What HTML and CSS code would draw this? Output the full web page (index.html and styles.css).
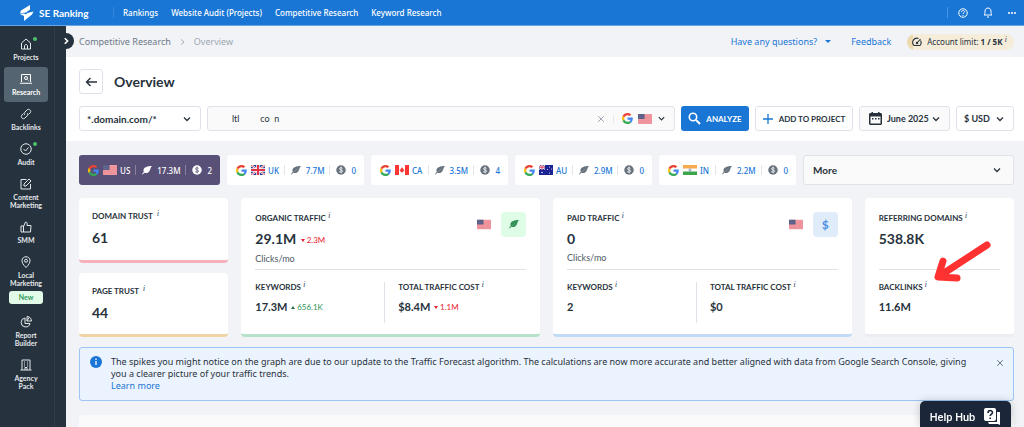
FILE: index.html
```html
<!DOCTYPE html>
<html lang="en">
<head>
    <meta charset="UTF-8">
    <meta name="viewport" content="width=device-width, initial-scale=1.0">
    <title>SE Ranking - Overview</title>
    <link rel="stylesheet" href="styles.css">
</head>
<body>
    <!-- shared icons -->
    <svg class="sprite" aria-hidden="true">
        <symbol id="google" viewBox="0 0 48 48">
            <path fill="#EA4335" d="M24 9.5c3.5 0 6.700 1.200 9.200 3.600l6.900-6.900C35.900 2.400 30.500 0 24 0 14.600 0 6.500 5.400 2.600 13.200l8 6.200C12.400 13.700 17.700 9.500 24 9.500z"/>
            <path fill="#4285F4" d="M47 24.500c0-1.600-.2-3.100-.4-4.500H24v9h12.900c-.6 3-2.200 5.500-4.800 7.200l7.700 6C44.400 38 47 31.800 47 24.500z"/>
            <path fill="#FBBC05" d="M10.500 28.600c-.5-1.500-.8-3-.8-4.600s.3-3.100.8-4.600l-8-6.200C.9 16.500 0 20.100 0 24s.9 7.500 2.600 10.800z"/>
            <path fill="#34A853" d="M24 48c6.500 0 11.900-2.100 15.900-5.800l-7.700-6c-2.200 1.500-4.900 2.300-8.200 2.300-6.300 0-11.600-4.200-13.500-9.900l-8 6.200C6.500 42.600 14.600 48 24 48z"/>
        </symbol>
        <symbol id="flag-us" viewBox="0 0 28 20">
            <rect width="28" height="20" rx="1" fill="#ef9aa2"/>
            <path d="M0 4.500h28M0 8.500h28M0 12.500h28M0 16.500h28" stroke="#e8808c"/>
            <rect width="13" height="10" fill="#5b5f88"/>
            <path d="M2 3h9M2 7h9" stroke="#8b8fae" stroke-dasharray="1 2"/>
        </symbol>
        <symbol id="flag-uk" viewBox="0 0 28 20">
            <rect width="28" height="20" fill="#22408f"/>
            <path d="M0 0l28 20M28 0L0 20" stroke="#fff" stroke-width="4"/>
            <path d="M0 0l28 20M28 0L0 20" stroke="#e2334b" stroke-width="1.500"/>
            <path d="M14 0v20M0 10h28" stroke="#fff" stroke-width="7"/>
            <path d="M14 0v20M0 10h28" stroke="#e2334b" stroke-width="4"/>
        </symbol>
        <symbol id="flag-ca" viewBox="0 0 28 20">
            <rect width="28" height="20" fill="#fff"/>
            <path fill="#fb3434" d="M0 0h8v20H0zM20 0h8v20h-8zM14 4l1.500 3 1-.5v3l2-1-.5 2 1 .5-3.500 3h-3l-3.500-3 1-.5-.5-2 2 1v-3l1 .5zM13.500 13h1v3h-1z"/>
        </symbol>
        <symbol id="flag-au" viewBox="0 0 28 20">
            <rect width="28" height="20" fill="#1c2394"/>
            <path d="M0 0l12 9M12 0L0 9" stroke="#fff" stroke-width="2"/>
            <path d="M6 0v9M0 4.500h12" stroke="#fff" stroke-width="3.500"/>
            <path d="M6 0v9M0 4.500h12" stroke="#e2334b" stroke-width="1.800"/>
            <g fill="#fff"><circle cx="6" cy="15" r="1.500"/><circle cx="21" cy="4" r="1"/><circle cx="21" cy="16" r="1"/><circle cx="17" cy="9" r="1"/><circle cx="25" cy="8" r="1"/></g>
        </symbol>
        <symbol id="flag-in" viewBox="0 0 28 20">
            <rect width="28" height="20" fill="#fff"/>
            <rect width="28" height="7" fill="#f6ab4e"/>
            <rect y="13" width="28" height="7" fill="#3da64c"/>
            <circle cx="14" cy="10" r="2.200" fill="none" stroke="#3b4a9b"/>
        </symbol>
        <symbol id="leaf" viewBox="0 0 20 20">
            <path fill="currentColor" d="M20 2C11 2 4 4 3 10c-.3 1.500 0 2.700.6 3.700L0 18l1.500 1 2.800-3.500c5 2 10-.5 11.700-5.500C17 7 17 5 20 2z"/>
            <path d="M5 14.500l8-7" stroke="#fff" stroke-opacity=".4" fill="none"/>
        </symbol>
        <symbol id="coin" viewBox="0 0 20 20">
            <circle cx="10" cy="10" r="9.500" fill="currentColor"/>
            <path d="M13 6.800C12.300 5.700 11.200 5.500 10 5.500c-1.700 0-3 .8-3 2.100 0 3 6.200 1.500 6.200 4.700 0 1.400-1.400 2.200-3.200 2.200-1.500 0-2.700-.5-3.300-1.600M10 3.500v13" fill="none" stroke="var(--cut)" stroke-width="1.600"/>
        </symbol>
        <symbol id="chevron" viewBox="0 0 10 10">
            <path d="M2 3.500l3 3 3-3" fill="none" stroke="currentColor" stroke-width="1.300"/>
        </symbol>
        <symbol id="close" viewBox="0 0 10 10">
            <path d="M1.500 1.500l7 7M8.500 1.500l-7 7" fill="none" stroke="currentColor" stroke-width="1.100"/>
        </symbol>
    </svg>

    <header class="topbar">
        <a class="logo" href="#">
            <svg width="14" height="16" viewBox="0 0 14 16"><path fill="#fff" d="M10 0v4.500L6 7.500 0 8.500 1 5.500zM13.500 6.500L12 9.500 4 16v-5L7.500 8zM0 9l4-.5 3 1.500-3 1z"/></svg>
            SE Ranking
        </a>
        <nav class="topnav">
            <a href="#">Rankings</a>
            <a href="#">Website Audit (Projects)</a>
            <a href="#">Competitive Research</a>
            <a href="#">Keyword Research</a>
        </nav>
        <div class="top-actions">
            <button aria-label="Help"><svg width="10" height="10" viewBox="0 0 20 20" class="line"><circle cx="10" cy="10" r="8.500"/><path d="M7 8c0-4 6-4 6-.5 0 2-3 2-3 4.500M10 14v2"/></svg></button>
            <button aria-label="Notifications"><svg width="10" height="11" viewBox="0 0 20 22" class="line"><path d="M2 16c2-2 2-4 2-8 0-8 12-8 12 0 0 4 0 6 2 8zM8 20h4"/></svg></button>
            <button aria-label="More options"><svg width="8" height="2" viewBox="0 0 8 2" fill="#fff"><circle cx="1" cy="1" r="1"/><circle cx="4" cy="1" r="1"/><circle cx="7" cy="1" r="1"/></svg></button>
        </div>
    </header>

    <div class="layout">
        <aside class="sidebar">
            <nav class="menu">
                <a class="menu-item dot" href="#"><svg viewBox="0 0 24 24" class="line"><path d="M3 10l9-8 9 8v12H3zM9 22v-6c0-4 6-4 6 0v6"/></svg>Projects</a>
                <a class="menu-item active" href="#"><svg viewBox="0 0 24 24" class="line"><path d="M3 18V3h18v15M0 20.500h24M15 13l2 2"/><circle cx="12" cy="10" r="3"/></svg>Research</a>
                <a class="menu-item" href="#"><svg viewBox="0 0 24 24" class="line"><path d="M10 14c-2-2-2-4 0-6l4-4c2-2 4-2 6 0s2 4 0 6l-3 3M14 10c2 2 2 4 0 6l-4 4c-2 2-4 2-6 0s-2-4 0-6l3-3"/></svg>Backlinks</a>
                <a class="menu-item dot" href="#"><svg viewBox="0 0 24 24" class="line"><circle cx="12" cy="12" r="10.500"/><path d="M7 12l4 4 6-7"/></svg>Audit</a>
                <a class="menu-item" href="#"><svg viewBox="0 0 24 24" class="line"><path d="M13 3H2v19h19V12M8 12v4h4L22 6l-4-4z"/></svg>Content<br>Marketing</a>
                <a class="menu-item" href="#"><svg viewBox="0 0 24 24" class="line"><path d="M2 10h5v12H2zM7 11l4-9c3 0 4 2 3 7h8l-1 13H7"/></svg>SMM</a>
                <a class="menu-item" href="#"><svg viewBox="0 0 24 24" class="line"><path d="M12 23C6 17 4 13 4 9c0-10 16-10 16 0 0 4-2 8-8 14z"/><circle cx="12" cy="9.500" r="3"/></svg>Local<br>Marketing<span class="new">New</span></a>
                <a class="menu-item" href="#"><svg viewBox="0 0 24 24" class="line"><path d="M10 4a9 9 0 1 0 10 11H10zM14 1v9h9c0-5-4-9-9-9zM14 10l4-7"/></svg>Report<br>Builder</a>
                <a class="menu-item" href="#"><svg viewBox="0 0 24 24" class="line"><path d="M4 22V2h16v20M1 22h22M10 22v-5h4v5M8 6h2M14 6h2M8 10h2M14 10h2M8 14h2M14 14h2"/></svg>Agency<br>Pack</a>
            </nav>
            <button class="expand" aria-label="Expand menu"><svg width="8" height="8" viewBox="0 0 10 10"><path d="M3.500 1.500L7 5 3.500 8.500" fill="none" stroke="#fff" stroke-width="2"/></svg></button>
        </aside>

        <main class="main">
            <div class="crumbs">
                <a href="#">Competitive Research</a>
                <svg width="5" height="6" viewBox="0 0 5 6"><path d="M1 .5L4 3 1 5.500" fill="none" stroke="#a4adb8"/></svg>
                <span class="current">Overview</span>
                <div class="crumb-links">
                    <a class="questions" href="#">Have any questions? <svg width="6" height="3" viewBox="0 0 6 3"><path d="M0 0h6L3 3z" fill="#1976d5"/></svg></a>
                    <a href="#">Feedback</a>
                    <span class="limit">
                        <svg width="10" height="10" viewBox="0 0 20 20"><path d="M4 17a8.500 8.500 0 0 1 9-14M17 7a8.500 8.500 0 0 1-1 10H4M10 12l7-8" fill="none" stroke="#28323c" stroke-width="2.200"/><circle cx="10" cy="12" r="2.500" fill="#28323c"/></svg>
                        <span>Account limit: <b>1 / 5K</b><i class="hint">i</i></span>
                    </span>
                </div>
            </div>

            <section class="search">
                <div class="title">
                    <button class="back" aria-label="Back"><svg width="12" height="10" viewBox="0 0 12 10"><path d="M12 5H1.500M5.500 1l-4 4 4 4" fill="none" stroke="#28323c" stroke-width="1.400"/></svg></button>
                    <h1>Overview</h1>
                </div>
                <form class="filters">
                    <div class="select mode">
                        <select aria-label="Search mode"><option>*.domain.com/*</option></select>
                        <svg class="arrow"><use href="#chevron"/></svg>
                    </div>
                    <div class="domain">
                        <input type="text" aria-label="Domain" value="ltl         co  n">
                        <button type="button" class="clear" aria-label="Clear"><svg width="8" height="8"><use href="#close"/></svg></button>
                        <button type="button" class="engine" aria-label="Search engine">
                            <svg width="11" height="11"><use href="#google"/></svg>
                            <svg width="14" height="10"><use href="#flag-us"/></svg>
                            <svg width="9" height="9"><use href="#chevron"/></svg>
                        </button>
                    </div>
                    <button type="button" class="analyze"><svg width="13" height="13" viewBox="0 0 13 13"><circle cx="5" cy="5" r="3.700" fill="none" stroke="#fff" stroke-width="1.600"/><path d="M8 8l4 4" stroke="#fff" stroke-width="2"/></svg>ANALYZE</button>
                    <button type="button" class="add"><svg width="10" height="10" viewBox="0 0 10 10"><path d="M5 0v10M0 5h10" stroke="#1976d5" stroke-width="1.300"/></svg>ADD TO PROJECT</button>
                    <div class="select month">
                        <svg class="calendar" width="13" height="13" viewBox="0 0 13 13"><path fill="#28323c" fill-rule="evenodd" d="M2.500 0H4v1h5V0h1.500v1H12l1 1v10l-1 1H1l-1-1V2l1-1h1.500zM1.500 4.500v7h10v-7zM3 6h1.500v1.500H3zM6 6h1.500v1.500H6zM9 6h1.500v1.500H9z"/></svg>
                        <select aria-label="Month"><option>June 2025</option></select>
                        <svg class="arrow"><use href="#chevron"/></svg>
                    </div>
                    <div class="select currency">
                        <select aria-label="Currency"><option>$ USD</option></select>
                        <svg class="arrow"><use href="#chevron"/></svg>
                    </div>
                </form>
            </section>

            <div class="content">
                <div class="countries">
                    <button class="country selected"><svg class="g"><use href="#google"/></svg><svg class="flag"><use href="#flag-us"/></svg><span>US</span><svg class="leaf"><use href="#leaf"/></svg><span>17.3M</span><svg class="coin"><use href="#coin"/></svg><span>2</span></button>
                    <button class="country"><svg class="g"><use href="#google"/></svg><svg class="flag"><use href="#flag-uk"/></svg><span>UK</span><svg class="leaf"><use href="#leaf"/></svg><span>7.7M</span><svg class="coin"><use href="#coin"/></svg><span>0</span></button>
                    <button class="country"><svg class="g"><use href="#google"/></svg><svg class="flag"><use href="#flag-ca"/></svg><span>CA</span><svg class="leaf"><use href="#leaf"/></svg><span>3.5M</span><svg class="coin"><use href="#coin"/></svg><span>4</span></button>
                    <button class="country"><svg class="g"><use href="#google"/></svg><svg class="flag"><use href="#flag-au"/></svg><span>AU</span><svg class="leaf"><use href="#leaf"/></svg><span>2.9M</span><svg class="coin"><use href="#coin"/></svg><span>0</span></button>
                    <button class="country"><svg class="g"><use href="#google"/></svg><svg class="flag"><use href="#flag-in"/></svg><span>IN</span><svg class="leaf"><use href="#leaf"/></svg><span>2.2M</span><svg class="coin"><use href="#coin"/></svg><span>0</span></button>
                    <div class="select more">
                        <select aria-label="More countries"><option>More</option></select>
                        <svg class="arrow"><use href="#chevron"/></svg>
                    </div>
                </div>

                <div class="cards">
                    <div class="trust">
                        <div class="card small pink">
                            <h2>DOMAIN TRUST <i class="hint">i</i></h2>
                            <div class="value">61</div>
                        </div>
                        <div class="card small yellow">
                            <h2>PAGE TRUST <i class="hint">i</i></h2>
                            <div class="value">44</div>
                        </div>
                    </div>
                    <div class="card green">
                        <div class="card-top">
                            <div>
                                <h2>ORGANIC TRAFFIC<i class="hint">i</i></h2>
                                <div class="value">29.1M <span class="down">2.3M</span></div>
                                <div class="unit">Clicks/mo</div>
                            </div>
                            <div class="badges">
                                <svg width="14" height="11" viewBox="0 0 28 20"><use href="#flag-us"/></svg>
                                <span class="tile organic"><svg width="10" height="10"><use href="#leaf"/></svg></span>
                            </div>
                        </div>
                        <div class="split">
                            <div>
                                <h2>KEYWORDS<i class="hint">i</i></h2>
                                <div class="number">17.3M <span class="up">656.1K</span></div>
                            </div>
                            <div>
                                <h2>TOTAL TRAFFIC COST<i class="hint">i</i></h2>
                                <div class="number">$8.4M <span class="down">1.1M</span></div>
                            </div>
                        </div>
                    </div>
                    <div class="card blue">
                        <div class="card-top">
                            <div>
                                <h2>PAID TRAFFIC<i class="hint">i</i></h2>
                                <div class="value">0</div>
                                <div class="unit">Clicks/mo</div>
                            </div>
                            <div class="badges">
                                <svg width="14" height="11" viewBox="0 0 28 20"><use href="#flag-us"/></svg>
                                <span class="tile paid">$</span>
                            </div>
                        </div>
                        <div class="split">
                            <div>
                                <h2>KEYWORDS<i class="hint">i</i></h2>
                                <div class="number">2</div>
                            </div>
                            <div>
                                <h2>TOTAL TRAFFIC COST<i class="hint">i</i></h2>
                                <div class="number">$0</div>
                            </div>
                        </div>
                    </div>
                    <div class="card plain">
                        <div class="card-top">
                            <div>
                                <h2>REFERRING DOMAINS<i class="hint">i</i></h2>
                                <div class="value">538.8K</div>
                            </div>
                        </div>
                        <div class="backlinks">
                            <h2>BACKLINKS<i class="hint">i</i></h2>
                            <div class="number">11.6M</div>
                        </div>
                        <svg class="pointer" width="60" height="46" viewBox="0 0 60 46"><path d="M54 7L8 37M10 23L5 39l19 1" fill="none" stroke="#ff3131" stroke-width="7" stroke-linecap="round" stroke-linejoin="round"/></svg>
                    </div>
                </div>

                <div class="notice">
                    <svg width="12" height="12" viewBox="0 0 12 12"><circle cx="6" cy="6" r="6" fill="#1976d5"/><path d="M6 2.500v1.500M6 5v4" stroke="#fff" stroke-width="1.300"/></svg>
                    <p>The spikes you might notice on the graph are due to our update to the Traffic Forecast algorithm. The calculations are now more accurate and better aligned with data from Google Search Console, giving you a clearer picture of your traffic trends.<br><a href="#">Learn more</a></p>
                    <button aria-label="Close"><svg width="8" height="8"><use href="#close"/></svg></button>
                </div>

                <div class="graph"></div>
            </div>
        </main>
    </div>

    <button class="help-hub">Help Hub <svg width="18" height="18" viewBox="0 0 18 18"><path d="M14 4h3v13l-2-1H6l-1-2h9z" fill="#fff"/><rect x="1" y="0" width="12" height="13" rx="2" fill="#fff"/><path d="M5 5c0-3.300 4.500-3 4.500-.5C9.500 6.200 7.200 6 7.200 8M7.200 9.500v1.500" fill="none" stroke="#1b2738" stroke-width="1.600"/></svg></button>
</body>
</html>
```
FILE: styles.css
```css
* {
    box-sizing: border-box;
}
body {
    margin: 0;
    min-height: 100vh;
    display: flex;
    flex-direction: column;
    font-family: Lato, "Noto Sans", sans-serif;
    font-size: 9px;
    color: #28323c;
    background-color: #f2f3f7;
}
a {
    color: #1976d5;
    text-decoration: none;
}
button, input, select {
    font: inherit;
    color: inherit;
    margin: 0;
    padding: 0;
    border: none;
    background: none;
}
button {
    cursor: pointer;
}
svg {
    display: block;
    flex-shrink: 0;
}
h1, h2, p {
    margin: 0;
}
.sprite {
    position: absolute;
    width: 0;
    height: 0;
}
.line {
    fill: none;
    stroke: currentColor;
    stroke-width: 2;
}

/* top bar */
.topbar {
    height: 26px;
    flex-shrink: 0;
    display: flex;
    align-items: center;
    padding: 0 8px 0 20px;
    background-color: #1976d5;
    border-bottom: 1px solid #69a6e6;
    color: #fff;
    white-space: nowrap;
}
.topbar a {
    color: #fff;
}
.logo {
    display: flex;
    align-items: center;
    gap: 5px;
    width: 93px;
    font-size: 10px;
    font-weight: bold;
}
.topnav {
    display: flex;
    gap: 13px;
    padding-left: 9px;
    border-left: 1px solid #3286dc;
    font-family: "Noto Sans", sans-serif;
    font-size: 8px;
    font-weight: 500;
}
.top-actions {
    display: flex;
    align-items: center;
    gap: 15px;
    margin-left: auto;
    padding-left: 10px;
    border-left: 1px solid #4a95e0;
}

/* left menu */
.layout {
    flex: 1;
    display: flex;
}
.sidebar {
    position: relative;
    width: 66px;
    flex-shrink: 0;
    background-color: #26323e;
}
.menu {
    width: 55px;
    height: 100%;
    padding: 6px 6px 0 4px;
    border-right: 1px solid #303c48;
}
.menu-item {
    position: relative;
    display: block;
    padding: 6px 0;
    border-radius: 3px;
    color: #e4e8eb;
    font-size: 7px;
    font-weight: bold;
    line-height: 8px;
    text-align: center;
}
.menu-item svg {
    width: 12px;
    height: 12px;
    margin: 0 auto 3px;
}
.menu-item.active {
    background-color: #546470;
    color: #fff;
}
.dot::after {
    content: "";
    position: absolute;
    top: 5px;
    right: 11px;
    width: 4px;
    height: 4px;
    border-radius: 50%;
    background-color: #4cc26a;
}
.new {
    display: block;
    width: 34px;
    margin: 4px auto 0;
    border-radius: 3px;
    background-color: #e2fbe9;
    color: #2e9a58;
    line-height: 13px;
}
.expand {
    position: absolute;
    top: 7px;
    right: -8px;
    width: 16px;
    height: 16px;
    display: grid;
    place-items: center;
    border-radius: 50%;
    background-color: #26323e;
}

/* breadcrumbs */
.main {
    flex: 1;
    min-width: 0;
}
.crumbs {
    display: flex;
    align-items: center;
    gap: 9px;
    height: 31px;
    padding: 0 10px 0 13px;
    font-family: "Noto Sans", sans-serif;
    font-size: 9px;
    white-space: nowrap;
}
.crumbs > a {
    color: #6c7986;
}
.current {
    color: #a0a8b1;
}
.crumb-links {
    display: flex;
    align-items: center;
    gap: 16px;
    margin-left: auto;
}
.questions {
    display: flex;
    align-items: center;
    gap: 8px;
    margin-right: 4px;
}
.limit {
    display: flex;
    align-items: center;
    gap: 5px;
    height: 16px;
    padding: 0 7px 0 5px;
    border-radius: 8px;
    background: linear-gradient(90deg, #ecd9b0 6px, #f5edda 6px);
    font-size: 8px;
}
.hint {
    margin-left: 2px;
    color: #3f5a74;
    font-family: "Liberation Serif", serif;
    font-size: 9px;
    font-weight: normal;
    line-height: 1px;
    vertical-align: 3px;
}

/* search form */
.search {
    padding: 12px 10px 10px 13px;
    background-color: #fff;
}
.title {
    display: flex;
    align-items: center;
    gap: 11px;
    margin-bottom: 12px;
}
h1 {
    font-size: 14px;
}
.back {
    width: 24px;
    height: 25px;
    display: grid;
    place-items: center;
    border: 1px solid #dfe2ea;
    border-radius: 3px;
}
.filters {
    display: flex;
    gap: 6px;
    font-weight: bold;
    white-space: nowrap;
}
.select {
    display: flex;
    align-items: center;
    position: relative;
    height: 25px;
    border: 1px solid #dfe2ea;
    border-radius: 3px;
    background-color: #fff;
}
.select select {
    width: 100%;
    height: 100%;
    padding: 0 20px 0 7px;
    appearance: none;
    outline: none;
    font-weight: bold;
}
.arrow {
    position: absolute;
    right: 8px;
    width: 10px;
    height: 10px;
    pointer-events: none;
}
.mode {
    width: 122px;
    font-size: 10px;
}
.domain {
    flex: 1;
    min-width: 0;
    display: flex;
    align-items: center;
    height: 25px;
    padding: 0 8px 0 24px;
    border: 1px solid #dfe2ea;
    border-radius: 3px;
    background-color: #fafafb;
}
.domain input {
    flex: 1;
    min-width: 0;
    outline: none;
    font-weight: normal;
}
.clear {
    padding-right: 8px;
    border-right: 1px solid #e4e7ec;
    color: #8e98a2;
}
.engine {
    display: flex;
    align-items: center;
    gap: 5px;
    margin-left: 8px;
}
.analyze, .add {
    display: flex;
    align-items: center;
    justify-content: center;
    height: 25px;
    border-radius: 3px;
    font-size: 8px;
}
.analyze {
    gap: 5px;
    width: 68px;
    background-color: #1976d5;
    color: #fff;
}
.add {
    gap: 6px;
    width: 98px;
    border: 1px solid #dfe2ea;
}
.month {
    width: 91px;
    padding-left: 9px;
    background-color: #fafafb;
}
.month select {
    padding-left: 5px;
    padding-right: 0;
}
.currency {
    width: 58px;
}

/* country tabs */
.content {
    padding: 14px 10px 0 13px;
}
.countries {
    display: flex;
    gap: 7px;
    margin-bottom: 13px;
    font-weight: bold;
}
.country {
    display: flex;
    align-items: center;
    width: 137px;
    height: 30px;
    padding: 0 8px 0 9px;
    border-radius: 3px;
    background-color: #fff;
    color: #1976d5;
    font-family: "Noto Sans", sans-serif;
    font-size: 8px;
    font-weight: 500;
    --cut: #fff;
}
.country.selected {
    width: 141px;
    background-color: #585077;
    color: #fff;
    --cut: #585077;
}
.country span {
    margin-left: 3px;
}
.country .coin + span {
    margin-left: 5px;
}
.g {
    width: 11px;
    height: 11px;
}
.flag {
    width: 14px;
    height: 10px;
    margin-left: 4px;
}
.leaf, .coin {
    height: 10px;
    padding-left: 6px;
    width: 17px;
    margin-left: auto;
    border-left: 1px solid #e2e5ea;
    color: #67727d;
}
.leaf + span {
    padding-left: 2px;
}
.selected .leaf, .selected .coin {
    border-left-color: #8981a0;
    color: #fff;
}
.more {
    flex: 1;
    height: 30px;
    background-color: #fafafb;
    font-size: 10px;
}
.more select {
    padding-left: 9px;
}
.more .arrow {
    right: 11px;
}

/* metric cards */
.cards {
    display: grid;
    grid-template-columns: 1fr 2fr 2fr 1fr;
    gap: 13px;
    margin-bottom: 10px;
}
.trust {
    display: grid;
    gap: 10px;
}
.card {
    position: relative;
    padding: 15px 14px 11px;
    border-bottom: 3px solid #ebedf1;
    border-radius: 4px;
    background-color: #fff;
}
.card.small {
    padding: 13px 13px 12px;
}
.card.pink {
    border-bottom-color: #f5b0bb;
}
.card.yellow {
    border-bottom-color: #efd5a3;
}
.card.green {
    border-bottom-color: #b5e2c8;
}
.card.blue {
    border-bottom-color: #c1daf6;
}
h2 {
    font-size: 8px;
    line-height: 11px;
    white-space: nowrap;
}
.value {
    margin-top: 6px;
    font-size: 14px;
    font-weight: bold;
    line-height: 18px;
}
.card.small .value {
    margin-top: 7px;
}
.number {
    margin-top: 7px;
    font-size: 11px;
    font-weight: bold;
    line-height: 14px;
}
.unit {
    margin-top: 4px;
    font-size: 9px;
    line-height: 12px;
    color: #4c5863;
}
.down, .up {
    font-size: 8px;
    font-weight: normal;
    vertical-align: 1px;
}
.down {
    color: #e8202e;
}
.up {
    color: #2b9457;
}
.down::before, .up::before {
    content: "";
    display: inline-block;
    margin: 0 2px 1px 1px;
    border: 2px solid transparent;
}
.down::before {
    border-top: 3px solid #e8202e;
    border-bottom: none;
}
.up::before {
    border-bottom: 3px solid #2b6f4a;
    border-top: none;
}
.card-top {
    display: flex;
    justify-content: space-between;
    height: 57px;
    border-bottom: 1px solid #dfe2e8;
}
.badges {
    display: flex;
    align-items: center;
    gap: 10px;
    height: 24px;
    margin-top: -1px;
}
.tile {
    width: 25px;
    height: 25px;
    display: grid;
    place-items: center;
    border-radius: 4px;
    font-size: 12px;
}
.organic {
    background-color: #dffde6;
    color: #2f8f54;
}
.paid {
    background-color: #e1ecfa;
    color: #4a90e2;
    font-weight: bold;
}
.split {
    display: grid;
    grid-template-columns: 10fr 11fr;
    margin-top: 12px;
}
.split > div {
    height: 41px;
}
.split > div + div {
    padding-left: 13px;
    border-left: 1px solid #dfe2e8;
}
.backlinks {
    margin-top: 12px;
}
.pointer {
    position: absolute;
    top: 40px;
    right: 21px;
}

/* notice */
.notice {
    display: flex;
    align-items: flex-start;
    gap: 9px;
    margin-bottom: 14px;
    padding: 8px 9px 8px 10px;
    border: 1px solid #9cc5f3;
    border-radius: 3px;
    background-color: #ebf3fe;
}
.notice p {
    flex: 1;
    padding-right: 14px;
    font-family: "Noto Sans", sans-serif;
    font-size: 9px;
    line-height: 12px;
}
.notice button {
    padding-top: 3px;
    color: #5c6771;
}
.graph {
    height: 12px;
    border-radius: 4px 4px 0 0;
    background-color: #fafafb;
}
.help-hub {
    position: fixed;
    right: 13px;
    bottom: 0;
    display: flex;
    align-items: center;
    justify-content: center;
    gap: 8px;
    width: 91px;
    height: 26px;
    padding-top: 6px;
    border-radius: 5px 5px 0 0;
    background-color: #1b2738;
    box-shadow: 0 0 8px rgba(0,0,0,0.2);
    color: #fff;
    font-family: Roboto, sans-serif;
    font-size: 11px;
    font-weight: 500;
}
```
